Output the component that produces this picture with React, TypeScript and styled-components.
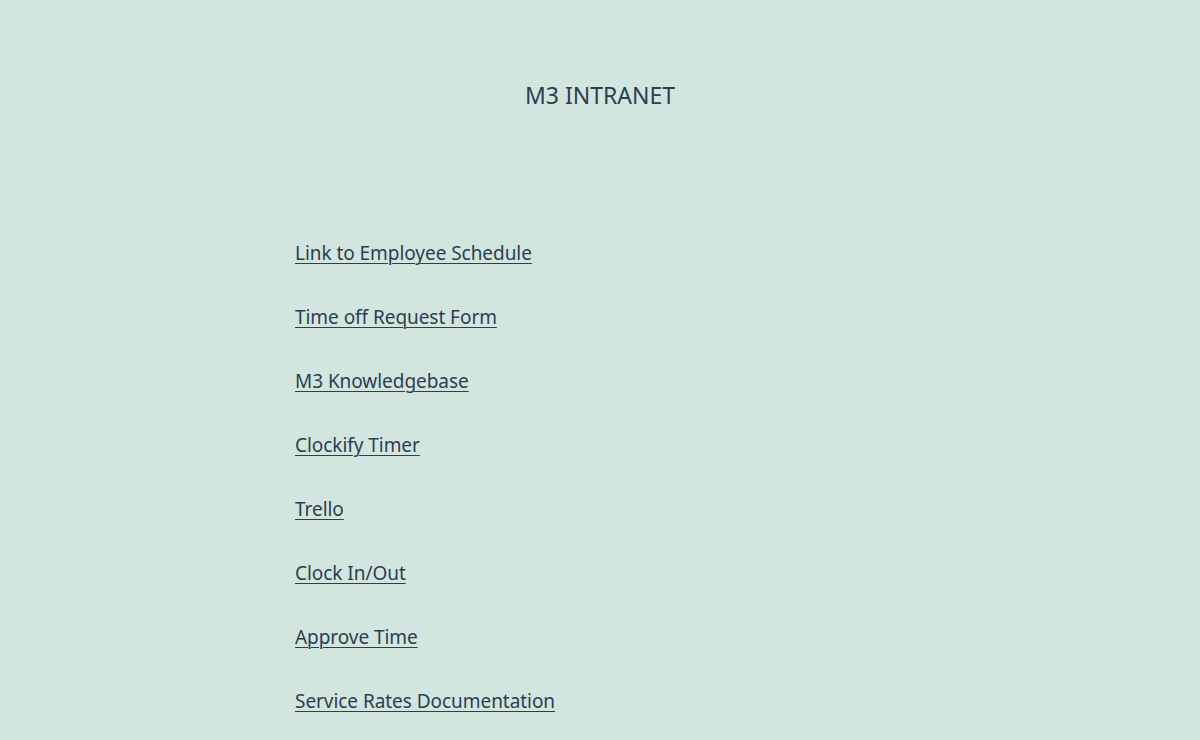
import React from "react";
import styled, { createGlobalStyle } from "styled-components";

const GlobalStyle = createGlobalStyle`
  html, body {
    margin: 0;
    padding: 0;
    background: #d2e5df;
  }
  body {
    font-family: "Noto Sans", "Open Sans", sans-serif;
    color: #2c3e50;
  }
`;

const Page = styled.div`
  min-height: 740px;
  background: #d2e5df;
`;

const Title = styled.h1`
  margin: 0;
  padding-top: 80px;
  text-align: center;
  font-size: 23px;
  font-weight: 400;
  line-height: 30px;
  color: #2c3e50;
`;

const LinkList = styled.ul`
  list-style: none;
  margin: 0;
  padding: 130px 0 0 295px;
  display: flex;
  flex-direction: column;
  gap: 37px;
`;

const Item = styled.li`
  font-size: 19px;
  line-height: 27px;
  height: 27px;
`;

const Link = styled.a`
  font-size: 19px;
  letter-spacing: -0.05px;
  color: #2c3e50;
  text-decoration: underline;
  text-underline-offset: 3px;
  text-decoration-thickness: 1px;
`;

const links = [
  "Link to Employee Schedule",
  "Time off Request Form",
  "M3 Knowledgebase",
  "Clockify Timer",
  "Trello",
  "Clock In/Out",
  "Approve Time",
  "Service Rates Documentation",
];

export default function App() {
  return (
    <Page>
      <GlobalStyle />
      <Title>M3 INTRANET</Title>
      <LinkList>
        {links.map((l) => (
          <Item key={l}>
            <Link href="#">{l}</Link>
          </Item>
        ))}
      </LinkList>
    </Page>
  );
}
